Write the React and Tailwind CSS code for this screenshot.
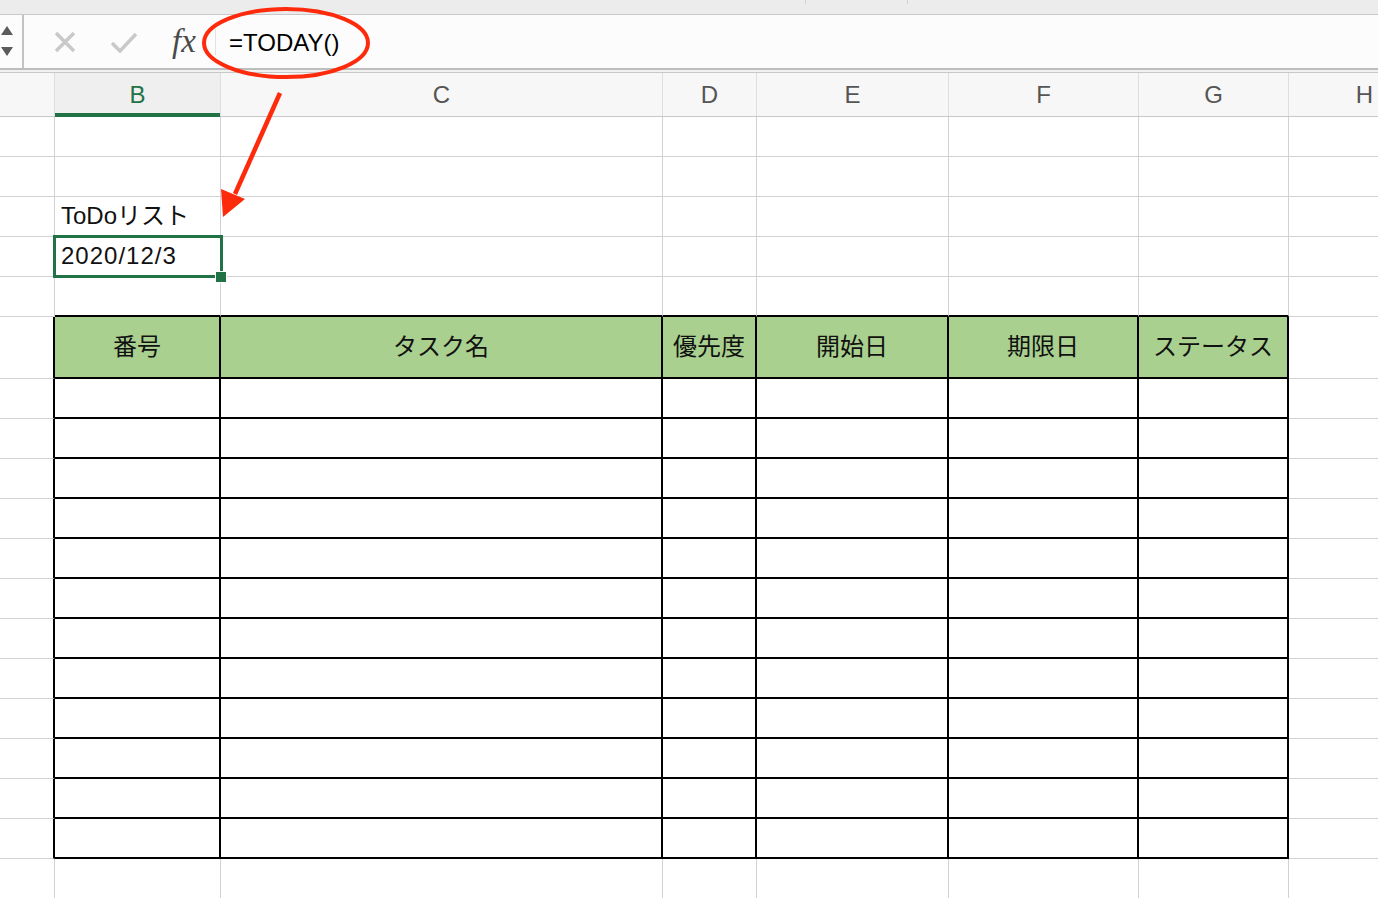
import React from "react";

const COLS = [55, 166, 442, 94, 192, 190, 150, 152];
const LETTERS = ["", "B", "C", "D", "E", "F", "G", "H"];
const HEADERS = ["番号", "タスク名", "優先度", "開始日", "期限日", "ステータス"];

const FONT = "font-['Liberation_Sans','Noto_Sans_CJK_JP',sans-serif]";

function cellClass(kind, i) {
  const gray = "border-b border-r border-[#d2d2d2]";
  if (kind === "above") {
    if (i >= 1 && i <= 6) return "border-b-2 border-b-black border-r border-r-[#d2d2d2]";
    return gray;
  }
  if (kind === "table" || kind === "thead") {
    if (i === 0) return "border-b border-b-[#d2d2d2] border-r-2 border-r-black";
    if (i >= 1 && i <= 6) return "border-b-2 border-r-2 border-black";
    return gray;
  }
  return gray;
}

function Row({ h, kind, b, selected }) {
  return (
    <div className="flex shrink-0" style={{ height: h }}>
      {[0, 1, 2, 3, 4, 5, 6, 7].map((i) => {
        const cls = cellClass(kind, i) + " shrink-0";
        const isHeadCell = kind === "thead" && i >= 1 && i <= 6;
        return (
          <div
            key={i}
            className={
              cls +
              " relative" +
              (isHeadCell ? " bg-[#a9d08e] flex items-center justify-center pb-[5px]" : "") +
              (i === 1 && b ? " flex items-end pl-[6px] pb-[8px]" : "")
            }
            style={{ width: COLS[i] }}
          >
            {isHeadCell && (
              <span className="text-[24px] leading-[28px] text-[#111] font-['Noto_Sans_CJK_JP',sans-serif]">
                {HEADERS[i - 1]}
              </span>
            )}
            {i === 1 && b && (
              <span
                className={
                  "text-[24px] leading-[24px] text-[#111] " +
                  (selected ? "tracking-[1px]" : "")
                }
              >
                {b}
              </span>
            )}
            {i === 1 && selected && (
              <>
                <div className="absolute -left-[2px] -top-[2px] -right-[3px] -bottom-[2px] border-[3px] border-[#217346] z-10" />
                <div className="absolute left-[160px] top-[34px] w-[12px] h-[12px] bg-[#217346] border border-white z-20" />
              </>
            )}
          </div>
        );
      })}
    </div>
  );
}

export default function App() {
  const rows = [
    { h: 40 },
    { h: 40 },
    { h: 40, b: "ToDoリスト" },
    { h: 40, b: "2020/12/3", selected: true },
    { h: 40, kind: "above" },
    { h: 62, kind: "thead" },
    ...Array.from({ length: 12 }, () => ({ h: 40, kind: "table" })),
    { h: 40 },
  ];

  return (
    <div className={"relative w-[1378px] h-[898px] overflow-hidden bg-white flex flex-col " + FONT}>
      {/* top strip */}
      <div className="h-[15px] shrink-0 bg-[#ececec] border-b border-[#c8c8c8] flex">
        <div className="ml-[805px] w-px h-[4px] bg-[#d2d2d2]" />
        <div className="ml-[101px] w-px h-[4px] bg-[#d2d2d2]" />
      </div>

      {/* formula bar */}
      <div className="h-[53px] shrink-0 bg-[#fcfcfc] flex items-center">
        <div className="w-[22px] h-full flex items-center justify-start pl-[1px]">
          <svg width="13" height="31" viewBox="0 0 13 31">
            <polygon points="0,9 12,9 6,0" fill="#5b5b5b" />
            <polygon points="0,21 12,21 6,30" fill="#5b5b5b" />
          </svg>
        </div>
        <div className="w-[2px] h-full bg-[#c3c3c3]" />
        <svg className="ml-[30px]" width="22" height="22" viewBox="0 0 22 22">
          <path d="M2 2 L20 20 M20 2 L2 20" stroke="#c9c9c9" strokeWidth="3.5" strokeLinecap="butt" fill="none" />
        </svg>
        <svg className="ml-[34px]" width="28" height="22" viewBox="0 0 28 22">
          <path d="M2 12 L10 20 L26 3" stroke="#c9c9c9" strokeWidth="3.5" fill="none" />
        </svg>
        <span className="ml-[34px] w-[30px] text-[33px] leading-none italic text-[#4a4a4a] font-['Liberation_Serif',serif]">
          fx
        </span>
        <div className="ml-[13px] w-px h-[26px] bg-[#e2e2e2]" />
        <span className="ml-[13px] mt-[2px] text-[24px] leading-none text-black">=TODAY()</span>
      </div>

      {/* double line */}
      <div className="h-[5px] shrink-0 border-t-2 border-[#bdbdbd] bg-[#f1f1f1] border-b border-b-[#c8c8c8]" />

      {/* column headers */}
      <div className="h-[44px] shrink-0 flex border-b border-[#c8c8c8] bg-[#f7f7f7]">
        {LETTERS.map((l, i) => (
          <div
            key={i}
            className={
              "relative shrink-0 flex items-center justify-center border-r border-[#dedede] text-[24px] " +
              (i === 1 ? "bg-[#efefef] text-[#217346]" : "text-[#555]")
            }
            style={{ width: COLS[i] }}
          >
            <span className="font-light">{l}</span>
            {i === 1 && <div className="absolute left-0 right-0 -bottom-[1px] h-[4px] bg-[#217346]" />}
          </div>
        ))}
      </div>

      {/* grid */}
      <div className="flex flex-col">
        {rows.map((r, idx) => (
          <Row key={idx} {...r} />
        ))}
      </div>

      {/* annotation overlay */}
      <svg
        className="absolute left-0 top-0 pointer-events-none z-30"
        width="1378"
        height="898"
        viewBox="0 0 1378 898"
      >
        <ellipse cx="286" cy="43" rx="82" ry="34" fill="none" stroke="#fe2a0c" strokeWidth="4" />
        <line x1="280" y1="93" x2="235" y2="194" stroke="#fe2a0c" strokeWidth="4.5" />
        <polygon points="223,217 221,189 245,199" fill="#fe2a0c" />
      </svg>
    </div>
  );
}
